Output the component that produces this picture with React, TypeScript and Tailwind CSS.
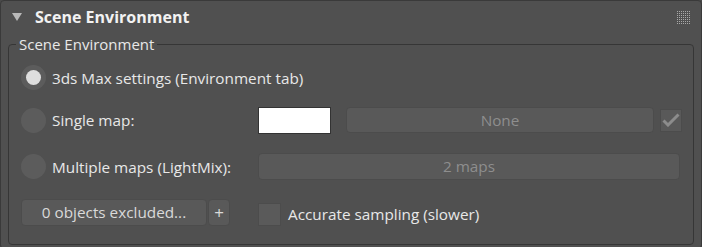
import React from "react";

const font = { fontFamily: '"Open Sans", "Noto Sans", sans-serif' };

function Radio({ checked }: { checked?: boolean }) {
  return (
    <div className="w-[25px] h-[25px] rounded-full bg-[#5c5c5c] flex items-center justify-center shrink-0">
      {checked && <div className="w-[15px] h-[15px] rounded-full bg-[#dedede]" />}
    </div>
  );
}

function Grip() {
  const dots: React.ReactElement[] = [];
  for (let r = 0; r < 7; r++)
    for (let c = 0; c < 7; c++)
      dots.push(<rect key={`${r}-${c}`} x={c * 2} y={r * 2} width={1} height={1} fill="#a8a8a8" />);
  return (
    <svg width="13" height="13" viewBox="0 0 13 13">
      {dots}
    </svg>
  );
}

export default function App() {
  return (
    <div className="w-[702px] h-[247px] bg-[#4a4a4a]" style={font}>
      <div className="w-[702px] h-[249px] bg-[#505050] border border-[#3a3a3a] rounded-[4px] overflow-hidden flex flex-col">
        <div className="h-[33px] flex items-center relative">
          <svg width="10" height="8" viewBox="0 0 10 8" className="ml-[11px] mt-[-1px]">
            <path d="M0 0 L10 0 L5 8 Z" fill="#b9b9b9" />
          </svg>
          <span className="ml-[13px] text-[16px] font-bold text-[#f2f2f2] leading-[20px] mt-[-1px]">Scene Environment</span>
          <div className="ml-auto mr-[11px] mt-[-1px]">
            <Grip />
          </div>
        </div>
        <fieldset className="mx-[7px] border border-[#363636] rounded-[4px] pl-[12px] pr-[10px] pb-[18px]">
          <legend className="ml-[-5px] px-[3px] text-[15px] leading-[20px] text-[#e8e8e8]">Scene Environment</legend>
          <div className="flex items-center h-[25px] mt-[11px]">
            <Radio checked />
            <span className="ml-[6px] mt-[1px] text-[15.3px] text-[#e8e8e8]">3ds Max settings (Environment tab)</span>
          </div>
          <div className="flex items-center h-[26px] mt-[17px]">
            <div className="w-[237px] flex items-center">
              <Radio />
              <span className="ml-[6px] mt-[1px] text-[15.3px] text-[#e8e8e8]">Single map:</span>
            </div>
            <div className="w-[73px] h-[27px] bg-white border border-[#333333]" />
            <div className="ml-[15px] w-[308px] h-[26px] rounded-[4px] bg-[#595959] border border-[#4c4c4c] flex items-center justify-center text-[15.3px] text-[#8e8e8e]">
              None
            </div>
            <div className="ml-[6px] w-[22px] h-[23px] bg-[#595959] border border-[#4c4c4c] flex items-center justify-center">
              <svg width="18" height="14" viewBox="0 0 18 14">
                <path d="M1.5 7.5 L6 12 L16.5 1.5" fill="none" stroke="#8c8c8c" strokeWidth="3" strokeLinejoin="miter" />
              </svg>
            </div>
          </div>
          <div className="flex items-center h-[27px] mt-[20px]">
            <div className="w-[237px] flex items-center">
              <Radio />
              <span className="ml-[6px] mt-[1px] text-[15.3px] text-[#e8e8e8]">Multiple maps (LightMix):</span>
            </div>
            <div className="w-[422px] h-[27px] rounded-[4px] bg-[#595959] border border-[#4c4c4c] flex items-center justify-center text-[15.3px] text-[#8e8e8e]">
              2 maps
            </div>
          </div>
          <div className="flex items-center h-[27px] mt-[19px]">
            <div className="w-[186px] h-[27px] rounded-[4px] bg-[#595959] border border-[#4c4c4c] flex items-center justify-center text-[15.3px] text-[#dadada]">
              0 objects excluded...
            </div>
            <div className="ml-[1px] w-[22px] h-[27px] rounded-[4px] bg-[#595959] border border-[#4c4c4c] flex items-center justify-center text-[17px] text-[#dadada]">
              +
            </div>
            <div className="ml-[28px] mt-[3px] w-[23px] h-[23px] bg-[#5a5a5a] border border-[#4c4c4c]" />
            <span className="ml-[7px] mt-[3px] text-[15.3px] text-[#e8e8e8]">Accurate sampling (slower)</span>
          </div>
        </fieldset>
      </div>
    </div>
  );
}
